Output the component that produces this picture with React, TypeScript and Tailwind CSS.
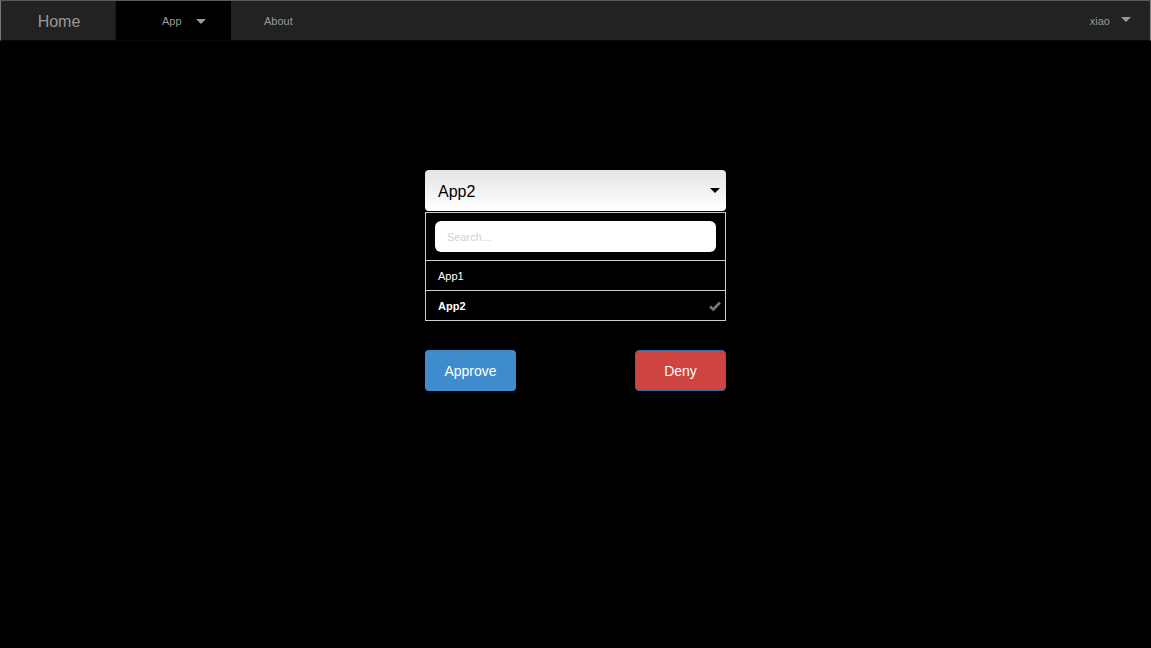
import React from "react";

function Caret({ className = "" }: { className?: string }) {
  return (
    <svg width="10" height="6" viewBox="0 0 10 6" className={className}>
      <path d="M0 0 L10 0 L5 5 Z" fill="currentColor" />
    </svg>
  );
}

export default function App() {
  return (
    <div
      className="w-[1151px] h-[648px] bg-black flex flex-col overflow-hidden"
      style={{ fontFamily: '"Liberation Sans", Arial, sans-serif' }}
    >
      <nav className="h-[41px] bg-[#222222] border-t border-l border-r border-t-[#5a5a5a] border-l-[#777] border-r-[#888] border-b border-b-[#080808] flex items-stretch shrink-0">
        <div className="w-[114px] flex items-center justify-center text-[16px] text-[#999] pl-[2px] pt-[2px]">
          Home
        </div>
        <div className="w-[116px] bg-black border-l border-[#1a1a1a] flex items-center pl-[46px] pt-[2px] text-[11px] text-[#999]">
          <span>App</span>
          <Caret className="ml-[14px] mt-[1px] text-[#999]" />
        </div>
        <div className="flex items-center pl-[33px] pt-[2px] text-[11px] text-[#999]">About</div>
        <div className="flex-1" />
        <div className="flex items-center pr-[19px] pt-[2px] text-[11px] text-[#999]">
          <span>xiao</span>
          <Caret className="ml-[11px] mt-[-3px] text-[#999]" />
        </div>
      </nav>
      <div className="flex justify-center pt-[129px]">
        <div className="w-[301px] flex flex-col">
          <button className="h-[41px] w-full rounded-[4px] bg-gradient-to-b from-[#e4e4e4] to-white flex items-center justify-between px-[13px] pt-[2px] text-[16px] text-black">
            <span>App2</span>
            <Caret className="mr-[-7px] mt-[-2px] text-black" />
          </button>
          <div className="mt-[1px] border border-[#cccccc] flex flex-col">
            <div className="h-[48px] px-[9px] pt-[8px] border-b border-[#cccccc]">
              <div className="h-[31px] rounded-[6px] bg-white flex items-center px-[12px] pt-[2px] text-[11px] text-[#d0d0d0]">
                Search...
              </div>
            </div>
            <div className="h-[30px] border-b border-[#cccccc] flex items-center px-[12px] pt-[2px] text-[11px] text-white">
              App1
            </div>
            <div className="h-[29px] flex items-center justify-between px-[12px] pt-[2px] text-[11px] font-bold text-white">
              <span>App2</span>
              <svg width="12" height="10" viewBox="0 0 12 10" className="mr-[-8px] mt-[-2px]">
                <path d="M1 5.5 L4.3 8.5 L11 1.5" stroke="#777" strokeWidth="2.6" fill="none" />
              </svg>
            </div>
          </div>
          <div className="mt-[29px] flex justify-between">
            <button className="w-[91px] h-[41px] rounded-[4px] bg-[#3f8ccd] text-white text-[14px] pt-[2px]">
              Approve
            </button>
            <button className="w-[91px] h-[41px] rounded-[4px] bg-[#cf4341] border border-[#3d6aa0] text-white text-[14px] pt-[2px]">
              Deny
            </button>
          </div>
        </div>
      </div>
    </div>
  );
}
